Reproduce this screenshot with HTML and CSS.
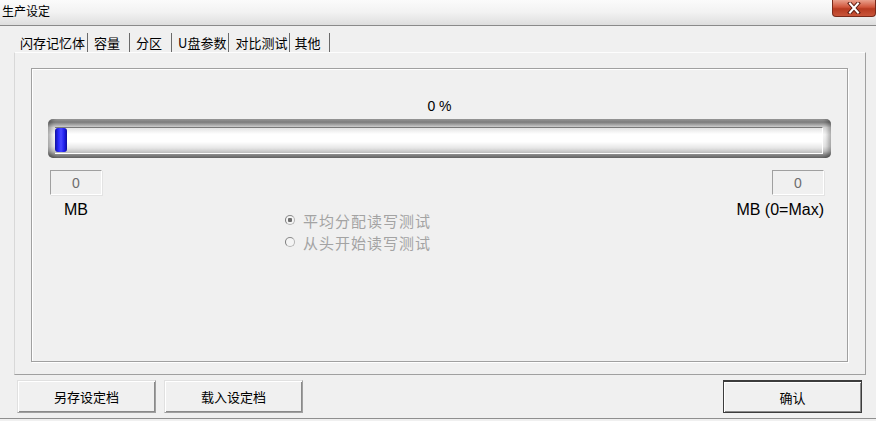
FILE: index.html
```html
<!DOCTYPE html>
<html>

<head>
    <meta charset="UTF-8">
    <title>生产设定</title>
    <link rel="stylesheet" href="styles.css">
</head>

<body>
    <header class="titlebar">
        <span class="title">生产设定</span>
        <a class="close" href="#" title="关闭">
            <svg width="18" height="12" viewBox="0 0 18 12">
                <path d="M5 1.5 L13 10.5 M13 1.5 L5 10.5" stroke="#5a1a10" stroke-width="4" stroke-linecap="square"></path>
                <path d="M5 1.5 L13 10.5 M13 1.5 L5 10.5" stroke="#ffffff" stroke-width="2" stroke-linecap="square"></path>
            </svg>
        </a>
    </header>

    <div class="dialog">
        <nav class="tabs">
            <a class="tab" href="#">闪存记忆体</a>
            <a class="tab" href="#">容量</a>
            <a class="tab" href="#">分区</a>
            <a class="tab" href="#">U盘参数</a>
            <a class="tab active" href="#">对比测试</a>
            <a class="tab" href="#">其他</a>
        </nav>

        <div class="panel">
            <div class="group">
                <div class="percent">0 %</div>
                <div class="tube">
                    <div class="track">
                        <div class="thumb"></div>
                    </div>
                </div>

                <div class="limits">
                    <div class="limit start">
                        <input class="num" type="text" value="0" disabled>
                        <span class="unit">MB</span>
                    </div>
                    <div class="modes">
                        <label class="radio checked"><i></i>平均分配读写测试</label>
                        <label class="radio"><i></i>从头开始读写测试</label>
                    </div>
                    <div class="limit end">
                        <input class="num" type="text" value="0" disabled>
                        <span class="unit">MB (0=Max)</span>
                    </div>
                </div>
            </div>
        </div>

        <footer class="actions">
            <button class="btn">另存设定档</button>
            <button class="btn">载入设定档</button>
            <span class="spacer"></span>
            <button class="btn default">确认</button>
        </footer>
    </div>
</body>

</html>
```

FILE: styles.css
```css
html,
body {
    margin: 0;
    padding: 0;
    height: 100%;
}

body {
    font-family: "Noto Sans CJK SC", "Liberation Sans", sans-serif;
    background: #f0f0f0;
    font-size: 13px;
    color: #000;
    display: flex;
    flex-direction: column;
    overflow: hidden;
}

.titlebar {
    height: 25px;
    flex-shrink: 0;
    display: flex;
    align-items: flex-start;
    background: linear-gradient(#fbfbfb, #f2f2f2 50%, #dedede);
    border-bottom: 1px solid #8a8a8a;
}

.titlebar .title {
    font-size: 12px;
    line-height: 14px;
    padding: 4px 0 0 2px;
}

.close {
    margin-left: auto;
    width: 44px;
    height: 17px;
    display: flex;
    align-items: center;
    justify-content: center;
    background: linear-gradient(#e9a08c, #d0553b 45%, #b63a20 55%, #c8553a);
    border: 1px solid #7a2a1a;
    border-top: none;
    border-radius: 0 0 4px 4px;
    box-sizing: border-box;
}

.dialog {
    flex-grow: 1;
    display: flex;
    flex-direction: column;
    padding: 7px 10px 0 14px;
    border-bottom: 1px solid #8f8f8f;
    margin-bottom: 2px;
}

/* tabs */

.tabs {
    display: flex;
    height: 19px;
    padding-left: 6px;
}

.tab {
    box-sizing: border-box;
    min-width: 36px;
    padding: 0 2px 0 0;
    margin-right: 6px;
    font-size: 13px;
    line-height: 19px;
    color: #000;
    text-decoration: none;
    border-right: 1px solid #6a6a6a;
}

.tab.active {
    margin-right: 4px;
}

/* panel */

.panel {
    width: 852px;
    height: 323px;
    box-sizing: border-box;
    border: 1px solid #a0a0a0;
    border-top-color: #fdfdfd;
    border-left-color: #d8d8d8;
    padding: 15px 17px 12px 16px;
    display: flex;
}

.group {
    flex-grow: 1;
    border: 1px solid #a0a0a0;
    box-shadow: inset 1px 1px #ffffff, 1px 1px #ffffff;
    padding: 29px 16px 0;
}

.percent {
    text-align: center;
    font-family: "Liberation Sans", sans-serif;
    font-size: 14px;
    line-height: 16px;
}

.tube {
    margin-top: 5px;
    height: 39px;
    box-sizing: border-box;
    padding: 8px 8px 4px 7px;
    border-radius: 5px;
    background: linear-gradient(#a4a4a4, #7c7c7c 8%, #b0b0b0 16%, #d8d8d8 22%, #f6f6f6 40%, #e6e6e6 70%, #c2c2c2 82%, #858585 92%, #6a6a6a);
    box-shadow: inset 5px 0 4px -2px rgba(0, 0, 0, .3), inset -5px 0 4px -2px rgba(0, 0, 0, .3);
    display: flex;
}

.track {
    flex-grow: 1;
    border-top: 1px solid #7a7a7a;
    border-bottom: 1px solid #ffffff;
    border-right: 1px solid #ffffff;
    background: linear-gradient(#e4e4e4, #ffffff 25%, #ffffff 55%, #e6e6e6 80%, #bcbcbc);
    padding: 0 0 1px 0;
    display: flex;
}

.thumb {
    width: 12px;
    border-radius: 3px;
    background: linear-gradient(90deg, #1010a0, #2a2aff 30%, #4848ff 50%, #2020f0 75%, #0c0c9a);
}

.limits {
    display: grid;
    grid-template-columns: auto 1fr auto;
    margin-top: 12px;
    padding: 0 7px 0 2px;
}

.limit {
    display: flex;
    flex-direction: column;
}

.limit.start {
    align-items: center;
}

.limit.end {
    align-items: flex-end;
}

.num {
    width: 52px;
    height: 25px;
    box-sizing: border-box;
    margin: 0;
    border: 1px solid #a0a0a0;
    border-right-color: #ffffff;
    border-bottom-color: #ffffff;
    box-shadow: 1px 1px #e3e3e3;
    background: #f0f0f0;
    font-family: "Liberation Sans", sans-serif;
    font-size: 14px;
    text-align: center;
    color: #6d6d6d;
    padding: 0;
}

.unit {
    font-family: "Liberation Sans", sans-serif;
    font-size: 16px;
    line-height: 17px;
    margin-top: 6px;
}

.modes {
    display: flex;
    flex-direction: column;
    padding: 40px 0 0 183px;
}

.radio {
    display: flex;
    align-items: center;
    height: 22px;
    line-height: 22px;
    font-size: 15px;
    letter-spacing: 1px;
    color: #a3a3a3;
}

.radio i {
    width: 8px;
    height: 8px;
    border: 1px solid #b4b4b4;
    border-left-color: #7a7a7a;
    border-top-color: #8a8a8a;
    border-radius: 50%;
    background: #f4f4f4;
    margin-right: 8px;
    position: relative;
    top: -1px;
}

.radio.checked i {
    background: radial-gradient(circle, #6e6e6e 0, #6e6e6e 2px, #f4f4f4 2.5px);
}

/* footer buttons */

.actions {
    display: flex;
    gap: 8px;
    margin-top: 5px;
    padding: 0 0 0 3px;
    width: 845px;
}

.spacer {
    flex-grow: 1;
}

.btn {
    width: 139px;
    height: 33px;
    font-family: "Noto Sans CJK SC", sans-serif;
    font-size: 13px;
    background: #f0f0f0;
    border: 1px solid #a0a0a0;
    border-top-color: #e0e0e0;
    border-left-color: #e0e0e0;
    box-shadow: inset 1px 1px #ffffff, inset -1px -1px #8a8a8a;
    color: #000;
    padding: 0;
}

.btn.default {
    border: 1px solid #3c3c3c;
    border-top-width: 2px;
}
```
